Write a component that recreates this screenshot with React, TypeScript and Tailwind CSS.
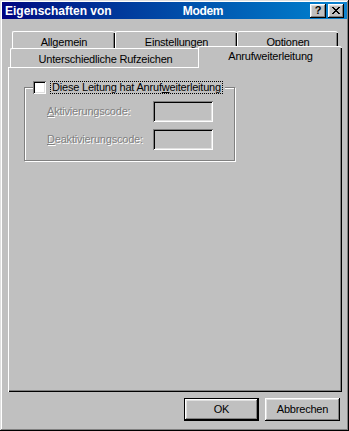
import React from "react";

const raised =
  "shadow-[inset_-1px_-1px_0_#000,inset_1px_1px_0_#fff,inset_-2px_-2px_0_#808080,inset_2px_2px_0_#dfdfdf]";
const sunken =
  "shadow-[inset_1px_1px_0_#808080,inset_-1px_-1px_0_#fff,inset_2px_2px_0_#000,inset_-2px_-2px_0_#dfdfdf]";

function Tab({ label, w, selected = false, h = 17 }: { label: string; w: number; selected?: boolean; h?: number }) {
  return (
    <div
      className={`relative flex items-start justify-center border-l border-t border-white rounded-tl-[2px] rounded-tr-[3px] bg-[#c0c0c0] ${
        selected ? "z-10 -mt-[2px] -ml-[2px] pt-[3px]" : "pt-[4px]"
      }`}
      style={{ width: w, height: h }}
    >
      <div className="absolute right-0 top-[1px] bottom-0 w-[2px] border-r border-black">
        <div className="absolute right-0 top-0 bottom-0 w-[1px] bg-[#808080]" />
      </div>
      <span className="text-[11px] leading-[13px] tracking-[-0.2px] text-black">{label}</span>
    </div>
  );
}

export default function App() {
  return (
    <div
      className="w-[349px] h-[431px] bg-[#c0c0c0] flex flex-col p-[2px] shadow-[inset_-1px_-1px_0_#000,inset_1px_1px_0_#dfdfdf,inset_-2px_-2px_0_#808080,inset_2px_2px_0_#fff] overflow-hidden"
      style={{ fontFamily: '"Liberation Sans", Arial, sans-serif' }}
    >
      {/* Title bar */}
      <div className="h-[17px] flex items-center bg-gradient-to-r from-[#000080] to-[#1084d0] pl-[3px] pr-[3px] shrink-0">
        <span className="text-white font-bold text-[12px] leading-[14px]">Eigenschaften von</span>
        <span className="text-white font-bold text-[12px] leading-[14px] tracking-[-0.3px] ml-[71px]">Modem</span>
        <div className="ml-auto flex gap-[2px]">
          <div className={`w-[16px] h-[14px] bg-[#c0c0c0] ${raised} flex items-center justify-center`}>
            <span className="text-black font-bold text-[11px] leading-[11px] -mt-[1px]">?</span>
          </div>
          <div className={`w-[16px] h-[14px] bg-[#c0c0c0] ${raised} flex items-center justify-center`}>
            <svg width="8" height="7" viewBox="0 0 8 7" shapeRendering="crispEdges">
              <path
                d="M0 0h2v1h-2zM6 0h2v1h-2zM1 1h2v1h-2zM5 1h2v1h-2zM2 2h4v1h-4zM3 3h2v1h-2zM2 4h4v1h-4zM1 5h2v1h-2zM5 5h2v1h-2zM0 6h2v1h-2zM6 6h2v1h-2z"
                fill="#000"
              />
            </svg>
          </div>
        </div>
      </div>

      {/* Tabs row 1 */}
      <div className="flex ml-[10px] mt-[12px] h-[17px] shrink-0">
        <Tab label="Allgemein" w={103} />
        <Tab label="Einstellungen" w={122} />
        <Tab label="Optionen" w={101} />
      </div>
      {/* Tabs row 2 */}
      <div className="flex items-start ml-[8px] h-[19px] shrink-0">
        <Tab label="Unterschiedliche Rufzeichen" w={190} h={19} />
        <Tab label="Anrufweiterleitung" w={144} h={22} selected />
      </div>

      {/* Panel */}
      <div className="ml-[6px] w-[334px] h-[325px] shrink-0 relative bg-[#c0c0c0] shadow-[inset_1px_1px_0_#fff,inset_-1px_-1px_0_#000,inset_-2px_-2px_0_#808080] pt-[20px] pl-[16px]">
        <div className="relative w-[211px] border border-[#808080] shadow-[1px_1px_0_#fff,inset_1px_1px_0_#fff] pl-[22px] pt-[13px] pb-[10px] flex flex-col gap-[7px]">
          {/* legend */}
          <div className="absolute left-[8px] -top-[7px] flex items-center bg-[#c0c0c0] pr-[2px]">
            <div className={`w-[13px] h-[13px] bg-white ${sunken}`} />
            <div className="ml-[4px] px-[1px] h-[13px] flex items-center border border-dotted border-black">
              <span className="text-[11px] leading-[11px] tracking-[-0.2px] text-black">
                Diese Leitung hat Anruf<span className="underline">w</span>eiterleitung
              </span>
            </div>
          </div>
          <div className="flex items-center">
            <span className="w-[106px] text-[11px] leading-[13px] tracking-[-0.2px] text-[#808080] [text-shadow:1px_1px_0_#fff]">
              <span className="underline">A</span>ktivierungscode:
            </span>
            <div className={`w-[60px] h-[21px] bg-[#c0c0c0] ${sunken}`} />
          </div>
          <div className="flex items-center">
            <span className="w-[106px] text-[11px] leading-[13px] tracking-[-0.2px] text-[#808080] [text-shadow:1px_1px_0_#fff]">
              <span className="underline">D</span>eaktivierungscode:
            </span>
            <div className={`w-[60px] h-[21px] bg-[#c0c0c0] ${sunken}`} />
          </div>
        </div>
      </div>

      {/* Buttons */}
      <div className="flex justify-end gap-[6px] mt-[6px] pr-[7px] shrink-0">
        <div className="w-[75px] h-[23px] border border-black">
          <div className={`w-full h-full ${raised} flex items-center justify-center`}>
            <span className="text-[11px] leading-[13px] tracking-[-0.2px] text-black">OK</span>
          </div>
        </div>
        <div className={`w-[75px] h-[23px] ${raised} flex items-center justify-center`}>
          <span className="text-[11px] leading-[13px] tracking-[-0.2px] text-black">Abbrechen</span>
        </div>
      </div>
    </div>
  );
}
